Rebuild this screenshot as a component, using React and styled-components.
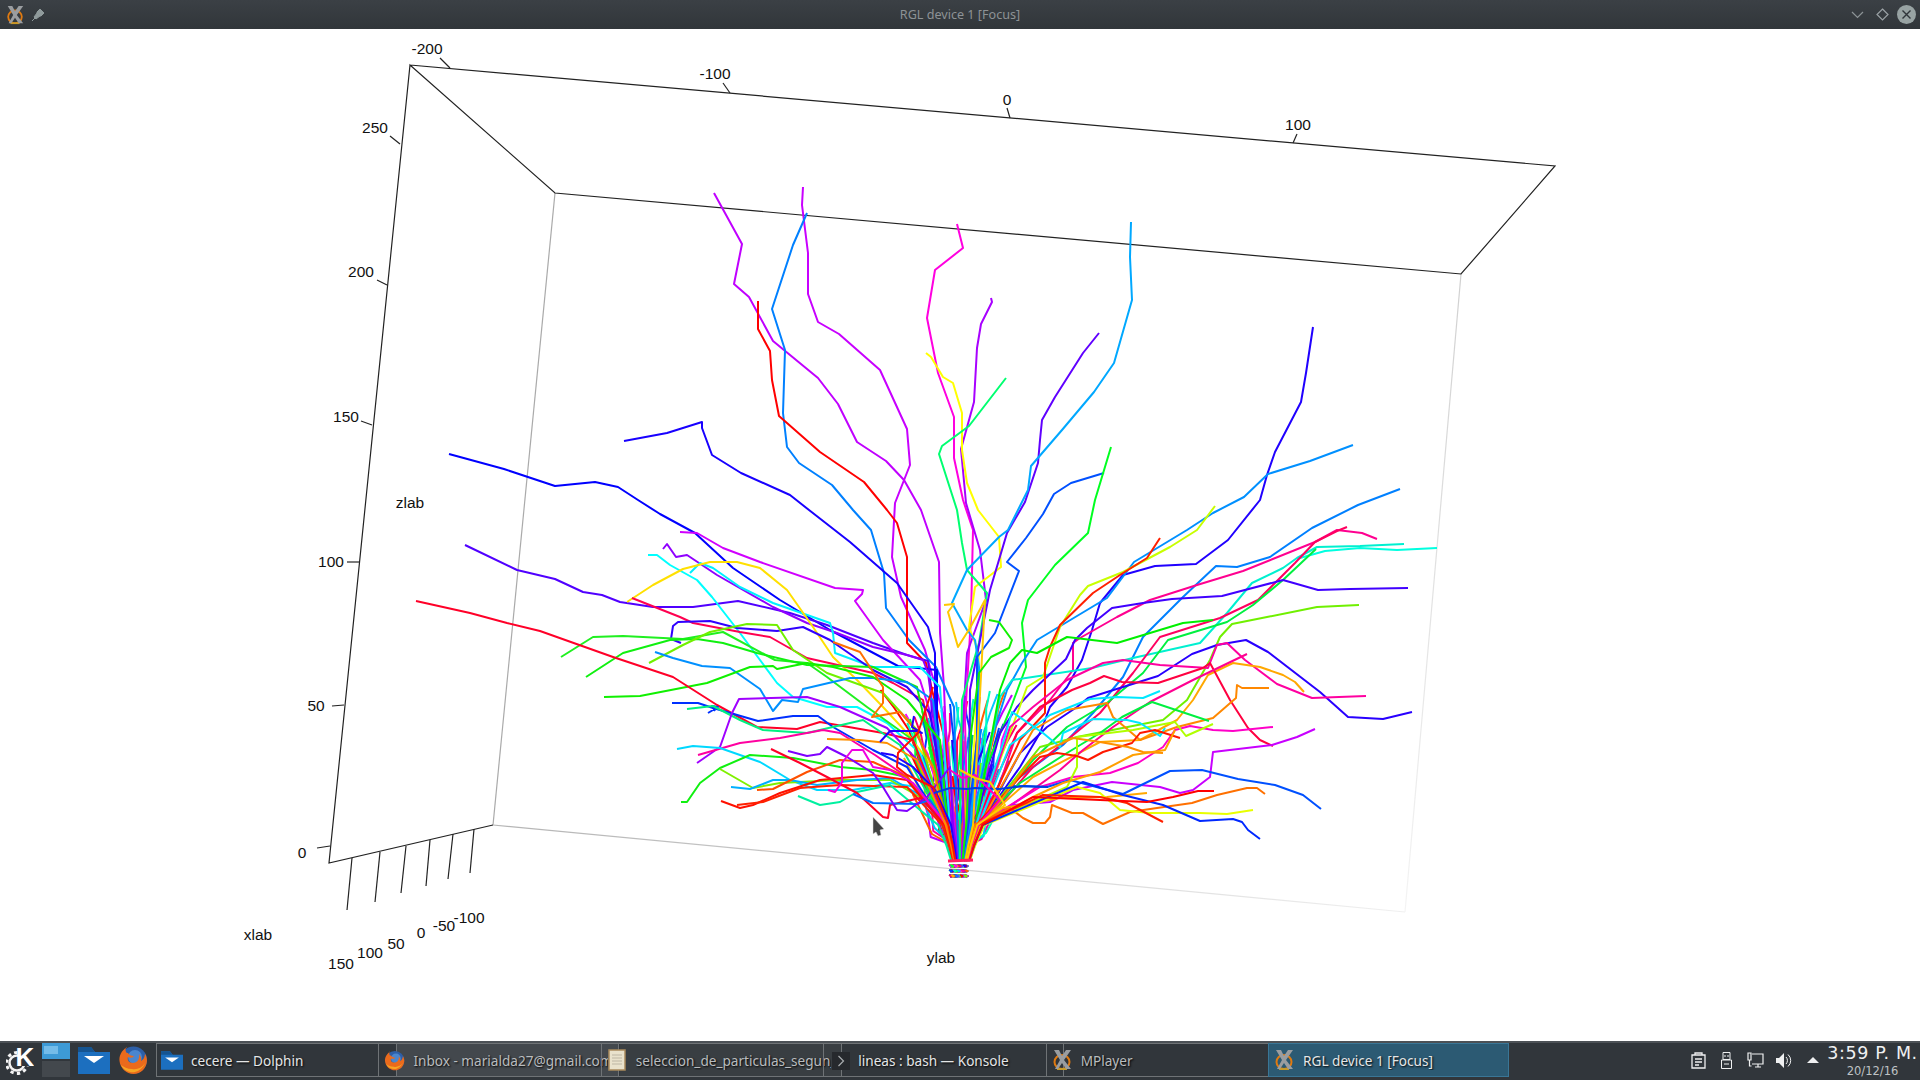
import React from "react";
import styled, { createGlobalStyle } from "styled-components";

const GlobalStyle = createGlobalStyle`
  html, body { margin: 0; padding: 0; background: #fff; }
  body { font-family: "Noto Sans", "Liberation Sans", sans-serif; }
`;

// traced trajectories, page coordinates. third value false = don't run it down to the base
const traces = [
  ["#c000ff", "714,193 742,244 734,284 749,297 773,341 818,378 838,404 857,442 886,461 904,480 921,510 939,562 940,633 944,687"],
  ["#c800ff", "803,187 802,205 808,253 808,294 818,322 839,334 880,370 907,429 910,465 895,503 892,557 901,597 925,650 945,720"],
  ["#0080ff", "807,213 793,245 772,309 785,350 783,413 787,447 799,463 832,485 853,510 871,530 884,573 886,608 909,640 936,667 954,707"],
  ["#ff0000", "758,301 758,329 770,351 772,380 779,416 820,452 864,482 887,510 897,523 907,557 907,643 926,663 932,690 945,740"],
  ["#ff00e0", "957,224 963,248 935,270 927,318 938,373 954,417 954,458 963,500 973,530 971,617 965,720"],
  ["#a800ff", "991,298 992,302 981,324 977,348 974,402 961,449 966,503 980,550 986,600 967,653 962,740"],
  ["#ffff00", "926,353 931,357 943,377 953,383 962,413 962,450 967,483 978,510 999,537 1001,567 975,587 969,627 979,653 975,733"],
  ["#00ff70", "1006,378 969,426 942,446 939,454 957,510 962,543 967,570 987,593 979,643 962,700"],
  ["#6000ff", "1099,333 1083,353 1055,397 1042,420 1040,440 1038,463 1025,502 1007,533 990,590 970,690"],
  ["#00a8ff", "1131,222 1130,257 1132,300 1114,363 1094,392 1062,430 1031,466 1028,490 1008,530 999,537 967,570 952,603 967,630 975,640 979,667 979,740"],
  ["#0050ff", "1104,473 1071,483 1054,494 1043,514 1026,538 1007,562 1019,571 995,633 977,657 977,740"],
  ["#00ff20", "1111,447 1095,500 1088,533 1055,565 1028,600 1022,623 1026,667 1010,710 985,770"],
  ["#2000ff", "1313,327 1306,373 1301,402 1275,452 1267,475 1260,500 1228,540 1196,564 1155,566 1123,575 1100,603 1092,630 1082,660 1067,687 1050,707 1040,733 1020,767"],
  ["#0090ff", "1353,445 1310,461 1268,474 1244,497 1213,513 1187,530 1134,562 1107,598 1037,640 1022,663 1007,690 985,760"],
  ["#0080ff", "1400,489 1358,505 1312,528 1270,557 1237,567 1216,566 1183,597 1143,637 1123,677 1093,713 1063,745 1020,777"],
  ["#ff0090", "1377,539 1362,533 1337,530 1315,542 1243,571 1197,585 1150,600 1117,617 1080,638 1073,643 1073,670 1050,700 1017,733 1000,783"],
  ["#00f0d0", "1404,544 1360,546 1317,547 1297,558 1283,568 1252,583 1227,613 1200,643 1133,658 1092,668 1012,680 1000,697"],
  ["#00ffe0", "1437,548 1397,550 1360,548 1325,551 1300,558", false],
  ["#ff0060", "1347,527 1337,531 1315,542 1295,563 1258,600 1220,618 1160,637 1133,673 1100,713 1067,740 1033,767"],
  ["#00f040", "1316,549 1283,580 1253,605 1227,622 1168,640 1143,673 1107,703 1067,727 1033,760"],
  ["#4000ff", "1408,588 1350,589 1318,590 1283,580 1222,596 1172,599 1143,603 1112,608 1087,628 1075,640 1066,659 1033,690 1017,707 1000,733"],
  ["#c8ff00", "1215,506 1197,530 1170,547 1123,572 1088,586 1080,595 1060,627 1043,677 1027,687"],
  ["#ff2000", "1160,538 1147,558 1120,575 1093,593 1060,625 1050,647 1045,663 1045,713 1020,740"],
  ["#00f000", "1213,620 1183,623 1117,643 1067,637 1037,653 1022,650 1010,663 1000,690"],
  ["#70f000", "1359,605 1317,607 1267,617 1232,624 1220,637 1210,660 1187,700 1163,720 1077,737 1040,747"],
  ["#2800ff", "1412,712 1383,719 1348,717 1320,692 1268,652 1246,640 1217,645 1192,654 1158,676 1088,698 1077,707 1047,727 1020,753"],
  ["#ff00a0", "1366,696 1312,698 1277,684 1245,660 1227,643 1217,645 1208,668 1160,665 1123,660 1103,663 1067,680 1033,707 1010,727"],
  ["#ffa800", "1304,692 1295,682 1283,675 1260,667 1233,663 1208,675 1193,700 1177,720 1140,740 1100,742 1033,777"],
  ["#ff0040", "1273,746 1260,740 1248,728 1230,700 1210,663 1203,668 1158,683 1122,682 1104,676 1090,683 1072,690 1040,707 1017,733"],
  ["#ff0090", "1247,654 1193,680 1150,702 1113,727 1083,750 1060,770"],
  ["#ff8800", "1269,688 1242,688 1237,685 1236,698 1213,718 1177,727 1140,740 1113,717 1107,703 1067,710 1033,730"],
  ["#ff00c8", "1273,727 1233,731 1213,730 1190,726 1175,730 1163,747 1138,763 1110,773 1073,777 1040,787"],
  ["#c800ff", "1315,729 1297,737 1272,745 1213,752 1210,777 1193,790 1180,793 1160,787 1112,782 1073,790 1050,802 1013,805"],
  ["#0050ff", "1321,809 1303,795 1275,785 1238,779 1202,770 1170,771 1123,794 1070,780 1047,787 1013,786"],
  ["#00f040", "1209,721 1152,702 1122,717 1100,733 1067,753 1020,783"],
  ["#b0ff00", "1213,724 1186,736 1175,722 1133,730 1077,737 1077,767 1067,787"],
  ["#00e8ff", "1160,691 1143,698 1117,697 1090,699 1050,715 1010,745"],
  ["#00e8ff", "1165,728 1160,736 1140,723 1127,720 1093,719 1063,733 1060,747 1043,733 1012,712 1004,740"],
  ["#ff1800", "1180,738 1155,730 1140,733 1132,743 1103,752 1088,760 1077,756 1057,753 1040,757 1020,777"],
  ["#ff9000", "1163,753 1143,752 1128,747 1100,742 1073,738 1033,757"],
  ["#ffa000", "1175,730 1165,750 1133,755 1100,772 1063,783 1033,797"],
  ["#ffa800", "1147,793 1107,797 1060,798 1033,803 1003,808"],
  ["#ff7000", "1265,794 1257,788 1247,788 1217,795 1192,803 1157,808 1130,812 1103,824 1083,813 1072,813 1052,805 1050,817 1045,823 1033,823 1023,818 1010,808"],
  ["#e8ff00", "1253,810 1227,814 1200,813 1150,813 1120,810 1100,793 1077,787"],
  ["#0028ff", "1260,839 1248,830 1242,822 1233,819 1200,821 1163,805 1123,795 1083,782"],
  ["#ff2000", "1163,822 1127,803 1100,797 1043,795"],
  ["#ff0000", "1214,791 1198,791 1173,797 1147,802 1100,800 1033,797"],
  ["#ffc800", "944,605 954,604 948,612 958,647 970,628 985,600"],
  ["#10f000", "989,620 999,622 1012,640 1009,648 991,657 979,673 971,733"],
  ["#0000ff", "449,454 504,469 555,486 595,482 618,487 638,500 660,514 695,533 733,568 780,600 830,630 898,666 937,670 937,733"],
  ["#1800ff", "624,441 667,433 702,422 702,428 712,455 741,473 790,495 809,510 850,542 897,583 928,627 935,653 935,733"],
  ["#5000ff", "465,545 517,570 555,579 583,592 602,595 620,602 653,607 693,607 738,601 790,613 827,625 873,643 907,655 928,661 930,677 932,717"],
  ["#d000ff", "680,532 697,533 723,548 760,562 835,588 863,590 862,594 855,601 883,640 920,680 945,760"],
  ["#9000ff", "663,549 667,544 676,557 687,555 717,575 773,607 807,623 837,633 873,647 907,655 923,660 928,673 937,740"],
  ["#00ffff", "648,555 657,555 670,565 697,580 712,597 740,633 777,683 793,697 827,707 857,707 887,723 920,753"],
  ["#00f0ff", "690,573 700,563 713,568 740,587 773,603 830,623 833,633 835,653 873,667 920,667 940,687"],
  ["#ffe000", "627,602 653,585 683,569 710,562 737,562 760,568 787,590 813,627 833,657 857,680 883,707 907,733 933,767"],
  ["#ff0050", "632,598 680,617 693,623 740,632 770,637 807,658 873,673 893,683 923,700"],
  ["#3000ff", "681,643 671,639 673,626 678,622 710,621 737,628 777,631 803,627 830,640 873,670 907,687 930,713"],
  ["#20f020", "561,657 593,637 623,636 683,639 723,632 775,660 807,663 827,677 867,707 913,740"],
  ["#10f010", "586,677 623,653 670,640 697,639 723,643 757,653 807,665 873,667 917,687"],
  ["#70f000", "649,663 683,645 710,632 747,624 777,625 793,650 827,673 883,693 917,730"],
  ["#0090ff", "655,652 673,658 702,666 730,668 760,689 773,711 782,700 798,702 803,689 850,678 873,678 907,682 933,700"],
  ["#10f000", "604,697 640,696 707,683 750,667 773,666 777,669 807,663 833,667 873,677 907,700 940,740"],
  ["#ff0028", "416,601 470,613 507,623 540,631 613,657 673,677 717,705 757,727 797,729 820,722 883,733 913,740"],
  ["#0030ff", "672,703 698,703 713,708 758,721 793,716 818,716 833,727 873,750 907,767"],
  ["#0030ff", "708,713 718,707 712,706 715,711", false],
  ["#00f080", "687,709 713,706 740,720 763,730 807,733 863,720 900,745"],
  ["#a000ff", "697,763 720,747 732,713 739,699 807,697 840,707 887,728 920,763"],
  ["#ff00a0", "698,755 740,743 780,738 823,730 840,733 875,755 907,777"],
  ["#00d8ff", "677,749 693,746 720,748 760,762 790,780 817,790 853,790 890,783 917,787"],
  ["#10f010", "681,802 687,802 700,783 720,768 750,755 793,758 840,767 873,770 907,777"],
  ["#80f000", "720,769 753,788 780,783 840,780 890,780 925,800"],
  ["#00b0ff", "731,787 750,789 773,780 790,780 817,785 857,780 890,778 920,795"],
  ["#ff5000", "757,790 773,789 807,772 840,760 873,762 907,777"],
  ["#ff1000", "721,801 740,808 753,805 780,793 820,780 873,775 907,780"],
  ["#ff2000", "737,805 763,802 800,788 840,785 907,787"],
  ["#00f0a0", "798,796 820,805 840,802 857,792 890,785"],
  ["#ff0028", "771,749 800,763 827,777 857,793 883,817 888,818 890,805 920,798"],
  ["#0070ff", "853,794 873,803 917,804 930,800"],
  ["#8000ff", "788,751 807,756 820,754 827,747 847,757 873,773 883,787 897,810 907,811 927,797 950,767"],
  ["#f000e0", "828,790 835,792 842,782 842,763 852,750 863,750 873,767 890,770 913,783"],
  ["#ff9000", "827,739 860,740 887,743 917,760"],
  ["#ff7000", "833,642 860,652 883,687 883,703 872,717 900,712 913,727 933,767"],
  ["#2000ff", "880,742 890,731 917,731 922,733 912,727 914,716", false],
  ["#2000ff", "881,753 893,755 913,767 935,790"],
  ["#ff1000", "933,687 918,733 898,753 897,767 907,775 933,787"],
  ["#0040e0", "934,793 950,788 967,789 975,788 999,789 1024,786 1048,787", false],
  ["#ff00c0", "950,770 962,778 975,775 990,790 1000,800"],
  ["#ffd000", "960,770 975,778 990,782 1005,805"],
];

const fanColours = [
  "#ff0000", "#ff00a0", "#0040ff", "#00ff40", "#ffb000", "#c000ff", "#00c8ff",
  "#ff0060", "#2000ff", "#70ff00", "#ff6000", "#00ffc0", "#ff00ff", "#0080ff",
];

const byPoints = (text) => text.split(" ").map((p) => p.split(",").map(Number));

// every trajectory bends down into the narrow neck above the base
const withNeck = (text, i) => {
  const pts = byPoints(text);
  const [x, y] = pts[pts.length - 1];
  const d = x - 958;
  const t = d / (Math.abs(d) + 40);
  const wobble = ((i * 5) % 7) - 3;
  if (y < 822) pts.push([960 + t * 30 + wobble, 825]);
  if (y < 842) pts.push([960 + t * 19 + wobble * 0.6, 845]);
  pts.push([960 + t * 12 + wobble * 0.4, 861]);
  return pts.map((p) => p.join(",")).join(" ");
};

// filler for the dense middle of the fan, wandering a little on the way down
const fanLines = Array.from({ length: 90 }, (_, i) => {
  const y = 690 + ((i * 23) % 110);
  const spread = 38 + (800 - y) * 0.25;
  const x = 958 + (((i * 37) % 100) / 50 - 1) * spread;
  const drift = ((i * 13) % 17) - 8;
  const leanX = 958 + (x - 958) * 0.85 + drift;
  return [fanColours[i % fanColours.length], `${x + drift * 1.5},${y} ${leanX},${y + 18} ${958 + (x - 958) * 0.75},${y + 40}`];
});

const speckles = Array.from({ length: 150 }, (_, i) => {
  const x = 949 + ((i * 7) % 17);
  const y = 865 + ((i * 5) % 15);
  return [fanColours[(i * 3) % fanColours.length], `${x},${y} ${x + 3},${y + 1} ${x + 1},${y + 2}`];
});

const zTicks = [
  [330, 846, 317, 848, "0", 302, 852],
  [344, 705, 332, 706, "50", 316, 705],
  [359, 562, 347, 562, "100", 331, 561],
  [372, 425, 361, 421, "150", 346, 416],
  [387, 285, 377, 280, "200", 361, 271],
  [400, 144, 390, 136, "250", 375, 127],
];

const topTicks = [
  [450, 68, 440, 58, "-200", 427, 48],
  [730, 93, 723, 83, "-100", 715, 73],
  [1010, 118, 1007, 108, "0", 1007, 99],
  [1293, 143, 1297, 134, "100", 1298, 124],
];

const xTicks = [
  [352, 858, 347, 910, "150", 341, 963],
  [380, 852, 375, 902, "100", 370, 952],
  [406, 846, 401, 893, "50", 396, 943],
  [430, 840, 426, 886, "0", 421, 932],
  [453, 834, 448, 879, "-50", 444, 925],
  [474, 829, 470, 873, "-100", 469, 917],
];

const Page = styled.div`
  width: 1920px;
  height: 1080px;
  display: flex;
  flex-direction: column;
  overflow: hidden;
`;

const TitleBar = styled.div`
  height: 29px;
  flex: none;
  display: flex;
  align-items: center;
  padding: 0 4px 0 5px;
  background: linear-gradient(#3b4045, #31363a);
  position: relative;
`;

const WindowTitle = styled.div`
  position: absolute;
  left: 0;
  right: 0;
  text-align: center;
  font-size: 12.6px;
  color: #8d9295;
  pointer-events: none;
`;

const TitleSide = styled.div`
  display: flex;
  align-items: center;
  gap: ${(props) => props.gap}px;
  margin-left: ${(props) => (props.right ? "auto" : "0")};
`;

const Canvas = styled.div`
  flex: 1;
  min-height: 0;
  background: #fff;
`;

const Plot = styled.svg`
  display: block;
  width: 1920px;
  height: 1012px;

  text {
    font-family: "Liberation Sans", Arial, sans-serif;
    font-size: 15.5px;
    fill: #111;
    text-anchor: middle;
    dominant-baseline: central;
  }
`;

const Taskbar = styled.div`
  height: 39px;
  flex: none;
  box-sizing: border-box;
  display: flex;
  align-items: center;
  gap: 8px;
  padding: 0 0 3px 6px;
  background: #31363b;
  border-top: 2px solid #4c5156;
`;

const Pager = styled.div`
  width: 28px;
  height: 34px;
  display: flex;
  flex-direction: column;
  gap: 2px;
`;

const Desk = styled.div`
  flex: 1;
  padding: 3px 12px 5px 2px;
  background: ${(props) => (props.current ? "#3d9ad6" : "#43484d")};
`;

const DeskWindow = styled.div`
  height: 100%;
  background: #74bce9;
`;

const Tasks = styled.div`
  display: flex;
  height: 34px;
`;

const Task = styled.div`
  width: 241px;
  flex: none;
  box-sizing: border-box;
  margin-right: -18.6px;
  padding: 0 10px 0 3px;
  display: flex;
  align-items: center;
  gap: 7px;
  position: relative;
  font-size: 13.6px;
  text-shadow: 1px 1px 2px #000;
  color: ${(props) => (props.active || props.bright ? "#e4e6e7" : "#b9bcbe")};
  background: ${(props) =>
    props.first || props.active
      ? props.active
        ? "#2c5a73"
        : "#31363b"
      : `linear-gradient(to right, transparent 18px, ${props.shade || "#31363b"} 18px)`};
  border: 1px solid ${(props) => (props.active ? "#3a7696" : "#6f7376")};

  &:last-child {
    margin-right: 0;
  }
`;

const TaskLabel = styled.div`
  flex: 1;
  min-width: 0;
  overflow: hidden;
  white-space: nowrap;
`;

const TaskIcon = styled.div`
  width: 24px;
  height: 22px;
  flex: none;
  display: flex;
  align-items: center;
  justify-content: center;
`;

const ScrollButton = styled.div`
  position: absolute;
  left: 8px;
  top: 8px;
  width: 18px;
  height: 18px;
  display: flex;
  align-items: center;
  justify-content: center;
  background: #26292d;
  z-index: 2;
`;

const Tray = styled.div`
  margin-left: auto;
  display: flex;
  align-items: center;
  height: 100%;
  padding-right: 3px;
`;

const TrayIcon = styled.svg`
  display: block;
  margin-right: ${(props) => props.gap}px;
`;

const Clock = styled.div`
  display: flex;
  flex-direction: column;
  align-items: center;
  width: 89px;
  font-family: "DejaVu Sans", sans-serif;
  color: #eff0f1;
`;

const ClockTime = styled.div`
  font-size: 17.5px;
  line-height: 21px;
  letter-spacing: 0.6px;
  white-space: nowrap;
`;

const ClockDate = styled.div`
  font-size: 11.5px;
  line-height: 14px;
  color: #bfc2c4;
`;

const MplayerIcon = ({ size = 22 }) => (
  <svg width={size} height={size} viewBox="0 0 22 22">
    <ellipse cx="11" cy="13" rx="7.5" ry="7" fill="none" stroke="#e07a10" strokeWidth="2" />
    <path d="M6 20h10" stroke="#c79a2a" strokeWidth="2" />
    <path d="M3 1h5l3 6 4-6h5l-7 10 7 9h-5l-4-6-4 6h-3l5-9z" fill="#9a9da0" />
  </svg>
);

const FolderIcon = ({ w = 32, h = 27 }) => (
  <svg width={w} height={h} viewBox="0 0 32 27">
    <path d="M0 0h13l4 5h15v22H0z" fill="#1c6fbf" />
    <path d="M0 0h13l4 5H0z" fill="#155491" />
    <path d="M6 9h20L16 16z" fill="#fff" />
  </svg>
);

const FirefoxIcon = ({ size = 30 }) => (
  <svg width={size} height={size} viewBox="0 0 30 30">
    <circle cx="15.5" cy="15" r="13.5" fill="#2d5fa8" />
    <circle cx="17" cy="12" r="7" fill="#4a86cf" />
    <path d="M9 2C3 6 1 11 1.500 16c.6 7 7 13 14 13 7.500 0 13-6 13.500-13 0-3-1-6-2-7-.5 4-2 6-4 7 .5-2 0-5-2-7 1 5-2 9-6 9-4 0-6-3-5-6 2 1 5 1 6-1-3 0-5-1-6-3-2 0-3-2-2-6z" fill="#ea6a1c" />
    <path d="M3 20c3 6 9 8 14 7 4-1 8-4 10-9-3 5-8 7-13 6-5 0-8-2-11-4z" fill="#f6a623" />
  </svg>
);

const KdeLogo = () => (
  <svg width="28" height="30" viewBox="0 0 28 30">
    <circle cx="11" cy="18" r="7.500" fill="none" stroke="#f4f4f4" strokeWidth="2.500" />
    <circle cx="11" cy="18" r="10.500" fill="none" stroke="#f4f4f4" strokeWidth="3" strokeDasharray="3.300 3.300" />
    <rect x="12" y="0" width="16" height="21" fill="#31363b" />
    <text
      x="19"
      y="21"
      textAnchor="middle"
      fontFamily="Liberation Sans, sans-serif"
      fontWeight="700"
      fontSize="26"
      fill="#fff"
    >
      K
    </text>
  </svg>
);

const NoteIcon = () => (
  <svg width="18" height="22" viewBox="0 0 18 22">
    <rect x="1" y="1" width="16" height="20" fill="#e9e2cc" stroke="#a98a5c" strokeWidth="1.500" />
    <path d="M4 6h10M4 9h10M4 12h10M4 15h10" stroke="#bdb6a4" strokeWidth="1" />
  </svg>
);

const App = () => {
  return (
    <>
      <GlobalStyle />
      <Page>
        <TitleBar>
          <TitleSide gap={6}>
            <MplayerIcon size={20} />
            <svg width="14" height="14" viewBox="0 0 14 14">
              <path d="M9 1l4 4-3 3-1 0-4 3-2-2 3-4 0-1zM4 10l-3 3" fill="#8f9a9b" stroke="#8f9a9b" />
            </svg>
          </TitleSide>
          <WindowTitle>RGL device 1 [Focus]</WindowTitle>
          <TitleSide gap={8} right>
            <svg width="21" height="8" viewBox="-4 0 21 8">
              <path d="M1 1l5.500 5.500L12 1" fill="none" stroke="#8c9396" strokeWidth="1.200" />
            </svg>
            <svg width="13" height="13" viewBox="0 0 13 13">
              <path d="M6.500 1l5.500 5.500-5.500 5.500L1 6.500z" fill="none" stroke="#9aa1a4" strokeWidth="1.200" />
            </svg>
            <svg width="19" height="19" viewBox="0 0 19 19">
              <circle cx="9.500" cy="9.500" r="9.500" fill="#98a3a3" />
              <path d="M5.500 5.500l8 8M13.500 5.500l-8 8" stroke="#30353a" strokeWidth="1.400" />
            </svg>
          </TitleSide>
        </TitleBar>

        <Canvas>
          <Plot viewBox="0 29 1920 1012">
            <defs>
              <linearGradient id="floorEdge" gradientUnits="userSpaceOnUse" x1="493" y1="825" x2="1405" y2="912">
                <stop offset="0" stopColor="#b4b4b4" />
                <stop offset="1" stopColor="#f0f0f0" />
              </linearGradient>
              <linearGradient id="sideEdge" gradientUnits="userSpaceOnUse" x1="1461" y1="274" x2="1405" y2="912">
                <stop offset="0" stopColor="#d0d0d0" />
                <stop offset="1" stopColor="#f4f4f4" />
              </linearGradient>
            </defs>
            <g fill="none" strokeWidth="1.200">
              <path d="M555 193L493 825" stroke="#aaa" />
              <path d="M493 825L1405 912" stroke="url(#floorEdge)" />
              <path d="M1461 274L1405 912" stroke="url(#sideEdge)" />
              <path d="M410 65L1555 166L1461 274L555 193L410 65L329 863L493 825" stroke="#222" />
              {[...zTicks, ...topTicks, ...xTicks].map((t) => (
                <line key={`${t[4]}-${t[0]}`} x1={t[0]} y1={t[1]} x2={t[2]} y2={t[3]} stroke="#222" />
              ))}
            </g>

            <g fill="none" strokeWidth="2" strokeLinejoin="round" strokeLinecap="butt">
              {fanLines.map(([colour, pts], i) => (
                <polyline key={i} points={withNeck(pts, i)} stroke={colour} />
              ))}
              {traces.map(([colour, pts, neck], i) => (
                <polyline key={i} points={neck === false ? pts : withNeck(pts, i)} stroke={colour} />
              ))}
              <path d="M948 861l25-1" stroke="#ff2060" strokeWidth="3" />
              {speckles.map(([colour, pts], i) => (
                <polyline key={i} points={pts} stroke={colour} strokeWidth="1.600" />
              ))}
            </g>

            {[...zTicks, ...topTicks, ...xTicks].map((t) => (
              <text key={`${t[4]}-${t[5]}`} x={t[5]} y={t[6]}>
                {t[4]}
              </text>
            ))}
            <text x="258" y="934">xlab</text>
            <text x="941" y="957">ylab</text>
            <text x="410" y="502">zlab</text>

            <path d="M873 817L884 829L880 830L881 835L878 836L876 832L873 834Z" fill="#444" stroke="#ddd" strokeWidth="0.500" />
          </Plot>
        </Canvas>

        <Taskbar>
          <KdeLogo />
          <Pager>
            <Desk current>
              <DeskWindow />
            </Desk>
            <Desk />
          </Pager>
          <FolderIcon />
          <FirefoxIcon />
          <Tasks>
            <Task first bright>
              <TaskIcon>
                <FolderIcon w={22} h={19} />
              </TaskIcon>
              <TaskLabel>cecere — Dolphin</TaskLabel>
            </Task>
            <Task shade="#43484d">
              <TaskIcon>
                <FirefoxIcon size={21} />
              </TaskIcon>
              <TaskLabel>Inbox - marialda27@gmail.com - Mozilla Thunderbird</TaskLabel>
            </Task>
            <Task shade="#393e42">
              <TaskIcon>
                <NoteIcon />
              </TaskIcon>
              <TaskLabel>seleccion_de_particulas_segun_tamano.R</TaskLabel>
            </Task>
            <Task bright>
              <ScrollButton>
                <svg width="8" height="12" viewBox="0 0 8 12">
                  <path d="M1.500 1l5 5-5 5" fill="none" stroke="#a9adaf" strokeWidth="1.200" />
                </svg>
              </ScrollButton>
              <TaskIcon />
              <TaskLabel>lineas : bash — Konsole</TaskLabel>
            </Task>
            <Task>
              <TaskIcon>
                <MplayerIcon />
              </TaskIcon>
              <TaskLabel>MPlayer</TaskLabel>
            </Task>
            <Task active>
              <TaskIcon>
                <MplayerIcon />
              </TaskIcon>
              <TaskLabel>RGL device 1 [Focus]</TaskLabel>
            </Task>
          </Tasks>
          <Tray>
            <TrayIcon width="15" height="17" viewBox="0 0 15 17" gap={15}>
              <path d="M1 3h13v13H1zM4 3V1h7v2" fill="none" stroke="#eff0f1" strokeWidth="1.300" />
              <path d="M4 7h7M4 10h7M4 13h4" stroke="#eff0f1" strokeWidth="1.300" />
            </TrayIcon>
            <TrayIcon width="11" height="17" viewBox="0 0 11 17" gap={15}>
              <path d="M2 .5h7v7H2zM.5 8h10v8.500H.5z" fill="none" stroke="#eff0f1" />
              <path d="M4 3v2M7 3v2M3 12h5" stroke="#eff0f1" />
            </TrayIcon>
            <TrayIcon width="17" height="17" viewBox="0 0 17 17" gap={11}>
              <path d="M5 2h11v10H5M1 1h3v7H1zM2.500 8v6h2M8 15h6M11 12v3" fill="none" stroke="#eff0f1" strokeWidth="1.200" />
            </TrayIcon>
            <TrayIcon width="18" height="17" viewBox="0 0 18 17" gap={14}>
              <path d="M1 6h3l5-5v15l-5-5H1z" fill="#eff0f1" />
              <path d="M11 5a5 5 0 0 1 0 7M13 2.500a8 8 0 0 1 0 12" fill="none" stroke="#eff0f1" />
            </TrayIcon>
            <TrayIcon width="12" height="6" viewBox="0 0 12 6" gap={9}>
              <path d="M6 0l6 6H0z" fill="#eff0f1" />
            </TrayIcon>
            <Clock>
              <ClockTime>3:59 P. M.</ClockTime>
              <ClockDate>20/12/16</ClockDate>
            </Clock>
          </Tray>
        </Taskbar>
      </Page>
    </>
  );
};

export default App;
